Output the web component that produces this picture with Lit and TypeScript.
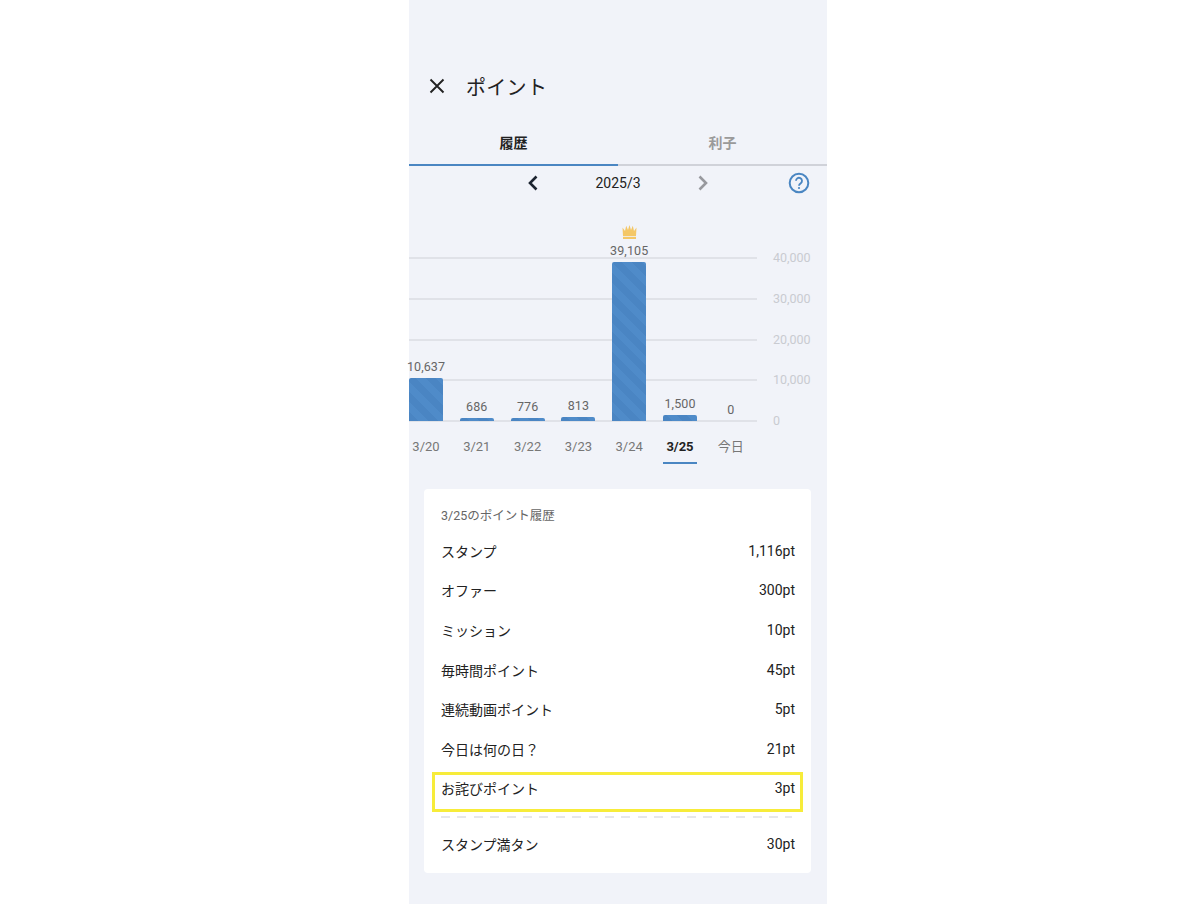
import { LitElement, html, css, svg } from "lit";
import { customElement } from "lit/decorators.js";

const bars = [
  { label: "3/20", value: "10,637", h: 43 },
  { label: "3/21", value: "686", h: 3 },
  { label: "3/22", value: "776", h: 3 },
  { label: "3/23", value: "813", h: 4 },
  { label: "3/24", value: "39,105", h: 159, crown: true },
  { label: "3/25", value: "1,500", h: 6, active: true },
  { label: "今日", value: "0", h: 0 },
];
const rows: [string, string][] = [
  ["スタンプ", "1,116pt"],
  ["オファー", "300pt"],
  ["ミッション", "10pt"],
  ["毎時間ポイント", "45pt"],
  ["連続動画ポイント", "5pt"],
  ["今日は何の日？", "21pt"],
];

@customElement("app-root")
export class AppRoot extends LitElement {
  static styles = css`
    :host {
      display: block;
      width: 1200px;
      height: 904px;
      background: #fff;
      overflow: hidden;
      font-family: Roboto, "Noto Sans CJK JP", sans-serif;
      color: #1c1c1e;
    }
    .phone {
      width: 418px;
      height: 904px;
      margin-left: 409px;
      background: #f1f3f9;
      display: flex;
      flex-direction: column;
    }
    .head {
      height: 30px;
      margin-top: 71px;
      display: flex;
      align-items: center;
      padding-left: 20px;
      gap: 21px;
      font-size: 20px;
      letter-spacing: 0.3px;
      color: #222;
    }
    .head svg { display: block; }
    .tabs {
      display: flex;
      margin-top: 21px;
      height: 42px;
      border-bottom: 2px solid #d0d2d9;
      box-sizing: content-box;
    }
    .tab {
      flex: 1;
      height: 42px;
      text-align: center;
      font-size: 14px;
      font-weight: 700;
      line-height: 42px;
      color: #9a9a9a;
      border-bottom: 2px solid transparent;
    }
    .tab.on { color: #222; border-bottom-color: #4a86c2; }
    .month {
      position: relative;
      height: 34px;
      display: flex;
      align-items: center;
      justify-content: center;
      font-size: 14px;
      color: #222;
    }
    .month span { width: 66px; margin: 0 46px; text-align: center; }
    .month .help { position: absolute; right: 17px; top: 6px; }
    .chart {
      position: relative;
      height: 256px;
      margin-top: 30px;
    }
    .grid {
      position: absolute;
      left: 0;
      right: 0;
      top: 27px;
      display: flex;
      flex-direction: column;
      gap: 38.75px;
    }
    .gl {
      height: 2px;
      width: 348px;
      background: #e0e2e8;
      position: relative;
    }
    .gl b {
      position: absolute;
      left: 364px;
      top: -7px;
      font-weight: 400;
      font-size: 12.5px;
      line-height: 16px;
      color: #c9cbd1;
      white-space: nowrap;
    }
    .cols {
      position: absolute;
      left: 0;
      top: 0;
      display: flex;
      gap: 16.8px;
    }
    .col { width: 34px; display: flex; flex-direction: column; align-items: center; }
    .plot {
      height: 191px;
      width: 34px;
      display: flex;
      flex-direction: column;
      justify-content: flex-end;
      align-items: center;
    }
    .plot > * { flex: none; }
    .val {
      font-size: 12.5px;
      line-height: 16px;
      color: #666;
      margin-bottom: 3px;
      white-space: nowrap;
      letter-spacing: 0.1px;
    }
    .bar {
      width: 34px;
      border-radius: 2px 2px 0 0;
      background: repeating-linear-gradient(45deg, #4a85c3 0 7px, #4f8bc9 7px 14px);
    }
    .crown { display: block; margin-bottom: 4px; }
    .day {
      margin-top: 17px;
      font-size: 13px;
      line-height: 18px;
      color: #777;
      white-space: nowrap;
    }
    .day.on { color: #222; font-weight: 700; }
    .under { width: 34px; height: 2px; margin-top: 6px; background: #4a86c2; }
    .card {
      margin: 3px 16px 0 15px;
      background: #fff;
      border-radius: 4px;
      padding: 18px 16px 8px 17px;
      height: 384px;
      box-sizing: border-box;
    }
    .cap { font-size: 12.5px; line-height: 18px; color: #666; margin-bottom: 6px; }
    .row {
      height: 39.6px;
      display: flex;
      align-items: center;
      justify-content: space-between;
      font-size: 14px;
      color: #222;
    }
    .mark { position: relative; }
    .mark::before {
      content: "";
      position: absolute;
      left: -9px;
      right: -8px;
      top: 3px;
      bottom: -4px;
      border: 3px solid #f7ec3a;
    }
    .dash {
      margin: 8px 3px 0 0;
      height: 2px;
      background: repeating-linear-gradient(90deg, #e6e7ea 0 9px, transparent 9px 16.4px);
    }
    .last { margin-top: 6px; }
  `;

  render() {
    return html`<div class="phone">
      <div class="head">
        <svg width="16" height="16" viewBox="0 0 16 16"><path d="M1.500 1.500 14.500 14.500M14.500 1.500 1.500 14.500" stroke="#222" stroke-width="1.900" fill="none"/></svg>
        <span>ポイント</span>
      </div>
      <div class="tabs">
        <div class="tab on">履歴</div>
        <div class="tab">利子</div>
      </div>
      <div class="month">
        <svg width="12" height="16" viewBox="0 0 12 16"><path d="M9.500 1.500 3 8l6.500 6.500" stroke="#1c2430" stroke-width="2.600" fill="none"/></svg>
        <span>2025/3</span>
        <svg width="12" height="16" viewBox="0 0 12 16"><path d="M2.500 1.500 9 8l-6.500 6.500" stroke="#98999e" stroke-width="2.600" fill="none"/></svg>
        <svg class="help" width="22" height="22" viewBox="0 0 22 22">
          <circle cx="11" cy="11" r="9.300" fill="none" stroke="#4a86c2" stroke-width="2"/>
          <path d="M8 8.800a3 3 0 1 1 4.800 2.400c-1.100.8-1.800 1.300-1.800 2.600" fill="none" stroke="#4a86c2" stroke-width="1.800"/>
          <circle cx="11" cy="16" r="1.100" fill="#4a86c2"/>
        </svg>
      </div>
      <div class="chart">
        <div class="grid">
          ${["40,000", "30,000", "20,000", "10,000", "0"].map(
            (t) => html`<div class="gl"><b>${t}</b></div>`
          )}
        </div>
        <div class="cols">
          ${bars.map(
            (b) => html`<div class="col">
              <div class="plot">
                ${b.crown
                  ? svg`<svg class="crown" width="15" height="14" viewBox="0 0 15 14"><path d="M0.500 2.500 3 6 4.200 0.800 6 5 7.500 0 9 5 10.800 0.800 12 6 14.500 2.500 14 11H1Z" fill="#f4c767"/><rect x="1" y="11.800" width="13" height="2.200" fill="#f4c767"/></svg>`
                  : ""}
                <div class="val">${b.value}</div>
                ${b.h ? html`<div class="bar" style="height:${b.h}px"></div>` : ""}
              </div>
              <div class="day ${b.active ? "on" : ""}">${b.label}</div>
              ${b.active ? html`<div class="under"></div>` : ""}
            </div>`
          )}
        </div>
      </div>
      <div class="card">
        <div class="cap">3/25のポイント履歴</div>
        ${rows.map(
          ([a, b]) => html`<div class="row"><span>${a}</span><span>${b}</span></div>`
        )}
        <div class="row mark"><span>お詫びポイント</span><span>3pt</span></div>
        <div class="dash"></div>
        <div class="row last"><span>スタンプ満タン</span><span>30pt</span></div>
      </div>
    </div>`;
  }
}
